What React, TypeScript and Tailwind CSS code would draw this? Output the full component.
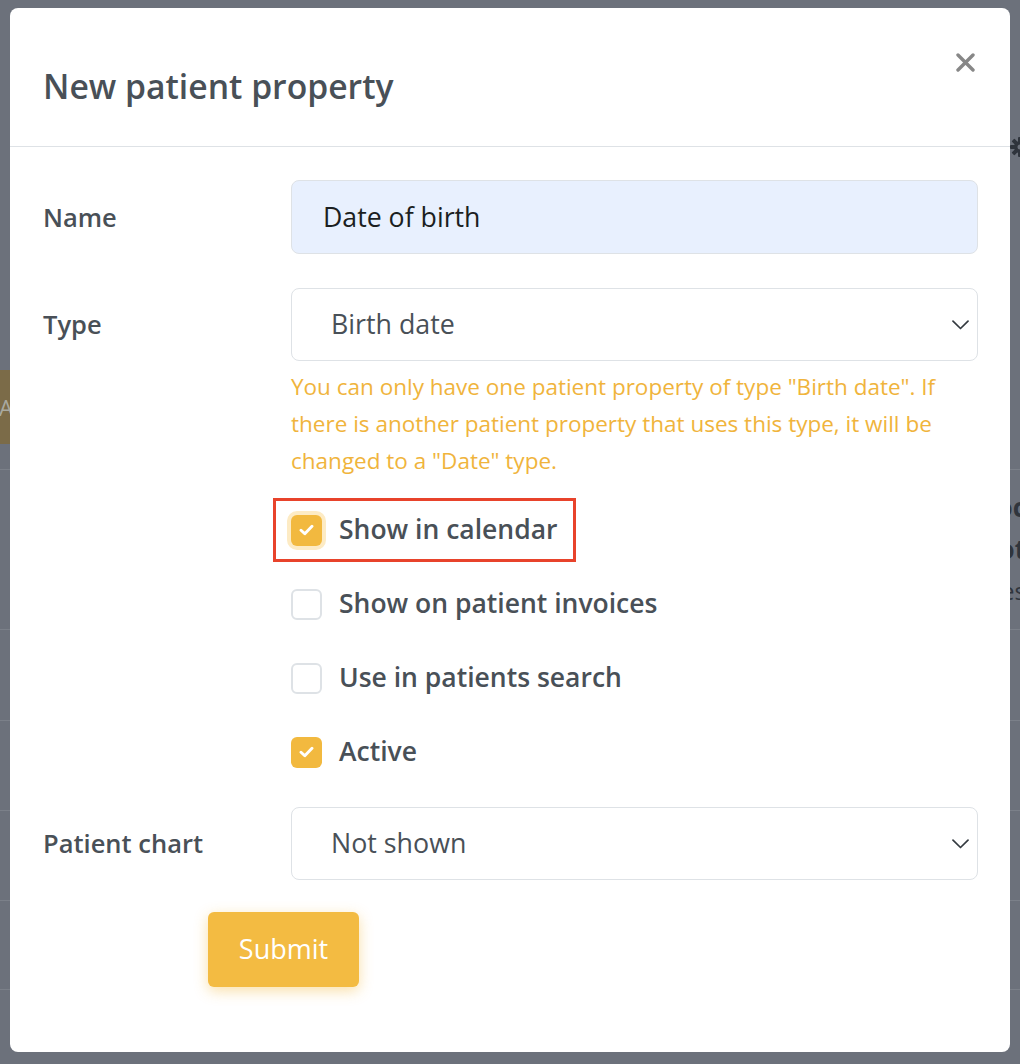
import React from "react";

function Check() {
  return (
    <svg width="15" height="12" viewBox="0 0 15 12" fill="none">
      <polyline points="2,6.2 5.8,9.8 13,2.3" stroke="white" strokeWidth="2.9" strokeLinecap="round" strokeLinejoin="round" />
    </svg>
  );
}

function Chevron() {
  return (
    <svg width="17" height="10" viewBox="0 0 17 10" fill="none">
      <path d="M1 1.2 L8.5 8.5 L16 1.2" stroke="#343a40" strokeWidth="1.7" strokeLinecap="round" strokeLinejoin="round" />
    </svg>
  );
}

function Box({ checked, focus }: { checked?: boolean; focus?: boolean }) {
  if (checked) {
    return (
      <div
        className={
          focus
            ? "w-[31px] h-[31px] rounded-[6px] bg-[#f2b93f] flex items-center justify-center shrink-0 shadow-[0_0_0_4px_#fdebc4]"
            : "w-[31px] h-[31px] rounded-[6px] bg-[#f2b93f] flex items-center justify-center shrink-0"
        }
      >
        <Check />
      </div>
    );
  }
  return <div className="w-[31px] h-[31px] rounded-[6px] border-2 border-[#dee2e6] bg-white shrink-0" />;
}

export default function App() {
  return (
    <div className="relative w-[1020px] h-[1064px] overflow-hidden bg-[#6c717b] font-[family-name:'Open_Sans',sans-serif]">
      {/* page behind the overlay */}
      <div className="flex flex-col">
        <div className="h-[138px]" />
        <div className="flex justify-end h-[18px] items-center pr-0">
          <svg width="20" height="20" viewBox="0 0 20 20" className="-mr-[10px]">
            <circle cx="10" cy="10" r="6" fill="#2f343c" />
            <g fill="#2f343c">
              <rect x="8" y="0" width="4" height="20" rx="1" />
              <rect x="0" y="8" width="20" height="4" rx="1" />
              <rect x="8" y="0" width="4" height="20" rx="1" transform="rotate(45 10 10)" />
              <rect x="8" y="0" width="4" height="20" rx="1" transform="rotate(-45 10 10)" />
            </g>
            <circle cx="10" cy="10" r="2.5" fill="#6c717b" />
          </svg>
        </div>
        <div className="h-[214px]" />
        <div className="h-[74px] w-[120px] -ml-[40px] bg-[#7b6b48] flex items-center pl-[39px] text-[22px] text-[#a9a9a0]">
          Add
        </div>
        <div className="h-[26px] border-b border-[#7b8089]" />
        <div className="h-[160px] border-b border-[#7b8089] flex justify-end">
          <div className="flex flex-col items-end -mr-[6px] pt-[16px] text-[26px] leading-[42px] font-bold text-[#30353d]">
            <span>Doc</span>
            <span>Not</span>
            <span className="font-normal text-[24px]">Yes</span>
          </div>
        </div>
        <div className="h-[91px] border-b border-[#7b8089]" />
        <div className="h-[90px] border-b border-[#7b8089]" />
        <div className="h-[90px] border-b border-[#7b8089]" />
        <div className="h-[89px] border-b border-[#7b8089]" />
      </div>

      {/* modal */}
      <div className="absolute left-[10px] top-[8px] w-[1000px] h-[1044px] bg-white rounded-[8px] flex flex-col">
        <div className="flex h-[139px] border-b border-[#dee2e6] shrink-0">
          <div className="pl-[33px] pt-[58px] text-[33.7px] leading-[40px] font-semibold text-[#495057]">
            New patient property
          </div>
          <div className="ml-auto mr-[35px] mt-[45px]">
            <svg width="19" height="19" viewBox="0 0 19 19">
              <path d="M2 2 L17 17 M17 2 L2 17" stroke="#878787" strokeWidth="3.4" strokeLinecap="round" />
            </svg>
          </div>
        </div>

        <div className="pl-[33px] pr-[32px] pt-[33px] flex flex-col">
          <div className="flex items-center">
            <div className="w-[248px] text-[25.5px] font-semibold text-[#495057]">Name</div>
            <div className="flex-1 h-[74px] rounded-[8px] border border-[#dee2e6] bg-[#e8f0fe] pl-[31px] flex items-center text-[26.7px] text-[#1b1e21]">
              Date of birth
            </div>
          </div>

          <div className="flex items-center mt-[34px]">
            <div className="w-[248px] text-[25.5px] font-semibold text-[#495057]">Type</div>
            <div className="flex-1 h-[73px] rounded-[8px] border border-[#dee2e6] bg-white pl-[39px] pr-[8px] flex items-center text-[26.8px] text-[#495057]">
              <span className="flex-1">Birth date</span>
              <Chevron />
            </div>
          </div>

          <div className="ml-[248px] mt-[7px] text-[22.5px] leading-[37px] text-[#f0b43c]">
            You can only have one patient property of type "Birth date". If there is another patient property that uses this type, it will be changed to a "Date" type.
          </div>

          <div className="ml-[248px] mt-[14px] flex flex-col">
            <div className="h-[74px] flex items-center">
              <div className="-ml-[18px] h-[64px] pl-[15px] pr-[15px] border-[3px] border-[#e8432b] flex items-center gap-[17px]">
                <Box checked focus />
                <span className="text-[26.5px] font-semibold text-[#495057]">Show in calendar</span>
              </div>
            </div>
            <div className="h-[74px] flex items-center gap-[17px]">
              <Box />
              <span className="text-[26.5px] font-semibold text-[#495057]">Show on patient invoices</span>
            </div>
            <div className="h-[74px] flex items-center gap-[17px]">
              <Box />
              <span className="text-[26.5px] font-semibold text-[#495057]">Use in patients search</span>
            </div>
            <div className="h-[74px] flex items-center gap-[17px]">
              <Box checked />
              <span className="text-[26.5px] font-semibold text-[#495057]">Active</span>
            </div>
          </div>

          <div className="flex items-center mt-[18px]">
            <div className="w-[248px] text-[25.5px] font-semibold text-[#495057]">Patient chart</div>
            <div className="flex-1 h-[73px] rounded-[8px] border border-[#dee2e6] bg-white pl-[39px] pr-[8px] flex items-center text-[26.8px] text-[#495057]">
              <span className="flex-1">Not shown</span>
              <Chevron />
            </div>
          </div>

          <div className="mt-[32px] ml-[165px]">
            <div className="w-[151px] h-[75px] rounded-[6px] bg-[#f3bb42] text-white text-[27px] font-normal flex items-center justify-center shadow-[0_4px_14px_rgba(243,187,66,0.45)]">
              Submit
            </div>
          </div>
        </div>
      </div>
    </div>
  );
}
